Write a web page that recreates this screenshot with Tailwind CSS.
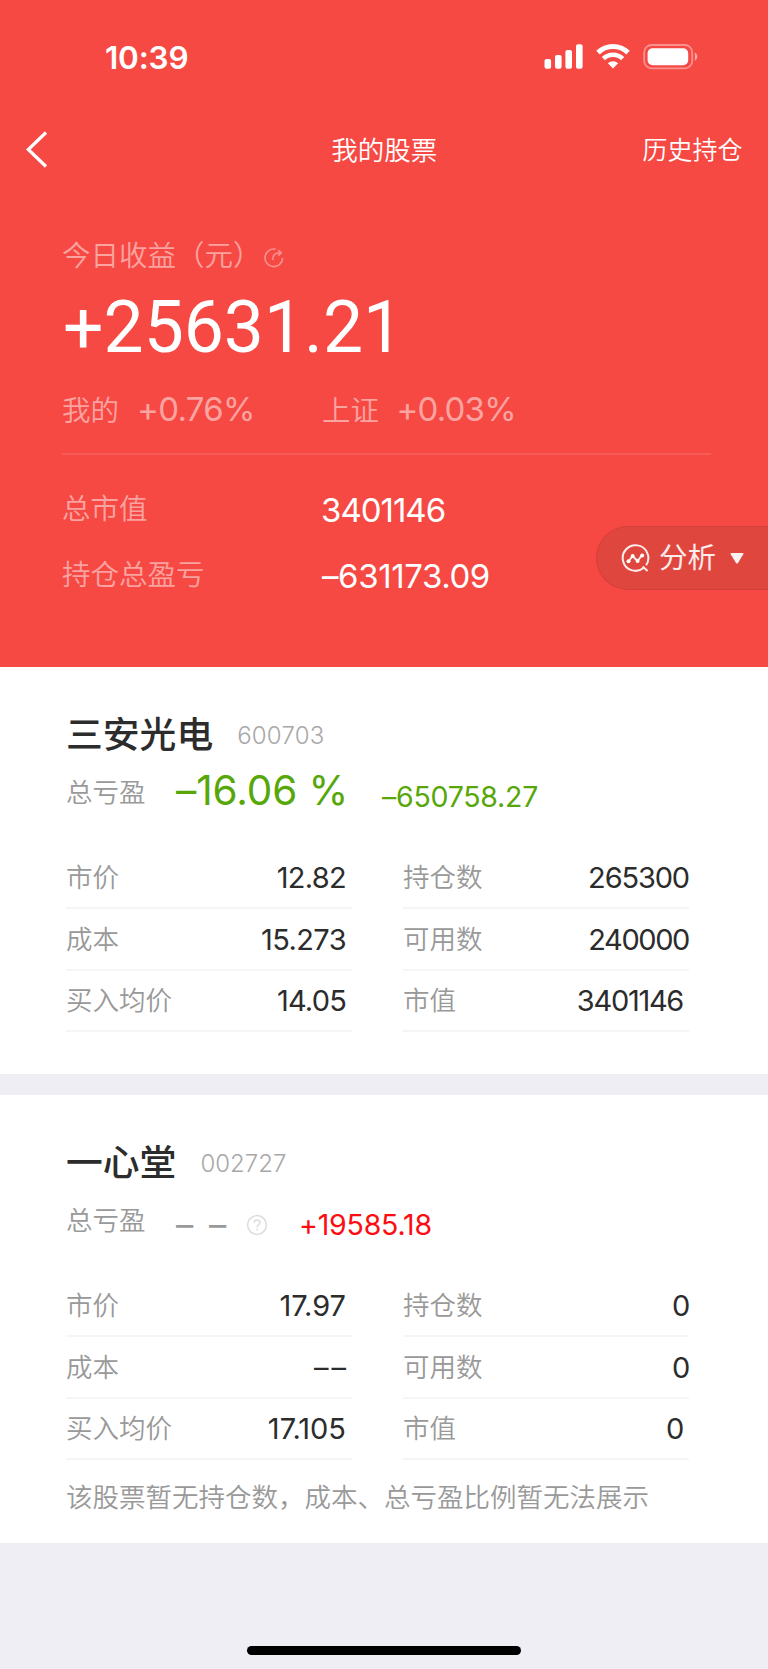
<!DOCTYPE html>
<html lang="zh-CN">
<head>
<meta charset="utf-8">
<title>我的股票</title>
<script src="https://cdn.jsdelivr.net/npm/@tailwindcss/browser@4"></script>
</head>
<body class="bg-[#efeef4] font-['Inter','Noto_Sans_CJK_SC',sans-serif] font-[350] leading-none whitespace-nowrap">
<div class="relative flex h-[1669px] w-[768px] flex-col overflow-hidden">
  <header class="relative h-[667px] bg-[#f64944] text-white">
    <!-- status bar -->
    <div class="flex h-[115px] items-center justify-between pl-[105px] pr-[69px]">
      <span class="text-[31.5px] font-semibold tracking-[-0.2px]">10:39</span>
      <div class="flex items-center gap-[13px] pb-[2px]">
        <svg width="39" height="26" viewBox="0 0 39 26" fill="#fff"><rect x="0.5" y="15" width="6.6" height="9.7" rx="2"/><rect x="11" y="11" width="6.6" height="13.7" rx="2"/><rect x="21.4" y="6" width="6.6" height="18.7" rx="2"/><rect x="32" y="0.3" width="6.6" height="24.4" rx="2"/></svg>
        <svg width="34" height="26" viewBox="0 0 34 26" fill="none" stroke="#fff"><path d="M2 8.6a21.5 21.5 0 0 1 30 0" stroke-width="5"/><path d="M7.4 14.6a13.8 13.8 0 0 1 19.2 0" stroke-width="4.6"/><path d="M11.9 19.2a7.6 7.6 0 0 1 10.2 0L17 24.4z" fill="#fff" stroke="none"/></svg>
        <svg width="56" height="26" viewBox="0 0 56 26"><rect x="1.2" y="1" width="48" height="23.4" rx="7.5" fill="none" stroke="#fff" stroke-opacity=".4" stroke-width="1.8"/><rect x="4.6" y="4.2" width="40.6" height="17" rx="5" fill="#fff"/><path d="M51.8 8.6c3.4 1.4 3.4 6.8 0 8.2z" fill="#fff" fill-opacity=".5"/></svg>
      </div>
    </div>
    <!-- navigation -->
    <div class="grid h-[70px] grid-cols-3 items-center pl-[26px] pr-[25.5px]">
      <svg width="24" height="38" viewBox="0 0 24 38" fill="none" stroke="#fff" stroke-width="3.2"><path d="M20 1.5 2.3 18.5 20 35.5"/></svg>
      <span class="text-center text-[26.5px]">我的股票</span>
      <span class="text-right text-[25px]">历史持仓</span>
    </div>
    <div class="pl-[62px] pt-[53px]">
      <div class="flex h-[37px] items-center text-[28.5px] text-white/50">
        <span>今日收益（元）</span>
        <svg class="ml-[1px] mt-[2px]" width="22" height="22" viewBox="0 0 22 22" fill="none" stroke="#fff" stroke-opacity=".4" stroke-width="1.6"><path d="M12.6 2.2A8.8 8.8 0 1 0 19.6 11"/><path d="M9.8 13c-.4-4.2 2-7.2 7-7.2M15.2 3.2l3 2.6-2.8 2.8"/></svg>
      </div>
      <div class="flex h-[105px] items-center pl-px font-['Roboto'] text-[71.4px] font-normal">+25631.21</div>
      <div class="flex h-[59px] items-center font-normal text-white/50">
        <span class="w-[75px] pt-[3px] text-[28.5px] font-[350]">我的</span><span class="w-[185px] text-[33px] tracking-[-0.7px]">+0.76%</span>
        <span class="w-[74.5px] pt-[3px] text-[28.5px] font-[350]">上证</span><span class="text-[33px] tracking-[-0.8px]">+0.03%</span>
      </div>
      <div class="mt-[14px] h-[2px] w-[649px] bg-white/10"></div>
      <div class="mt-[22px] flex h-[63px] items-center"><span class="w-[259px] pt-0.5 text-[28.5px] text-white/50">总市值</span><span class="pt-1 text-[33px] font-normal tracking-[-1px]">3401146</span></div>
      <div class="flex h-[68px] items-center"><span class="w-[260px] pt-0.5 text-[28.5px] text-white/50">持仓总盈亏</span><span class="pt-1 text-[33px] font-normal tracking-[-0.4px]">–631173.09</span></div>
    </div>
    <!-- floating analysis tab -->
    <div class="absolute right-0 top-[526px] flex h-[64px] w-[172px] items-center rounded-l-full border border-r-0 border-[#d53f3c] bg-[#df463e] pl-[24px] text-[28.5px] text-white/90">
      <svg width="29" height="29" viewBox="0 0 29 29" fill="none" stroke="#fff" stroke-opacity=".9" stroke-width="2"><path d="M22.5 24a12.8 12.8 0 1 1 2.6-2.8M21.6 22.4l5 4.6"/><path d="M7.5 17.5 11.5 12l5 5 4.6-6"/><g fill="#fff" stroke="none"><circle cx="7.5" cy="17.3" r="2"/><circle cx="11.7" cy="12" r="2"/><circle cx="16.6" cy="17" r="2"/><circle cx="21.2" cy="11.6" r="2"/></g></svg>
      <span class="ml-[9px] font-normal">分析</span>
      <svg class="ml-[14px]" width="14" height="11" viewBox="0 0 14 11" fill="#fff" fill-opacity=".92"><path d="M1.5 0h11q1.5 0 .8 1.2L8 9.9q-1 1.2-2 0L.7 1.2Q0 0 1.5 0z"/></svg>
    </div>
  </header>

  <section class="h-[407px] bg-white pl-[66px] pt-[43px]">
    <div class="flex h-[50px] items-center"><h2 class="text-[36.8px] font-medium text-[#2c2c2c]">三安光电</h2><span class="ml-[24px] pt-0.5 text-[24px] font-light tracking-[0.2px] text-[#a8a8a8]">600703</span></div>
    <div class="flex h-[62px] items-center text-[#57a70a]"><span class="w-[110px] pt-0.5 text-[26.5px] text-[#999]">总亏盈</span><span class="w-[206px] text-[40.5px] font-normal tracking-[-0.1px]">–16.06 %</span><span class="pt-3 text-[28.5px] font-normal tracking-[-0.25px]">–650758.27</span></div>
    <div class="mt-[26px] grid w-[623px] grid-cols-[286px_286px] justify-between text-[26.5px] text-[#999]">
      <div class="flex h-[61.4px] items-center justify-between border-b-2 border-[#f5f5f5] pr-[6px]"><span>市价</span><span class="text-[29px] font-normal tracking-[-0.7px] text-[#2c2c2c]">12.82</span></div>
      <div class="flex h-[61.4px] items-center justify-between border-b-2 border-[#f5f5f5]"><span>持仓数</span><span class="text-[29px] font-normal tracking-[-1.15px] text-[#2c2c2c]">265300</span></div>
      <div class="flex h-[61.4px] items-center justify-between border-b-2 border-[#f5f5f5] pr-[6px]"><span>成本</span><span class="text-[29px] font-normal tracking-[-0.6px] text-[#2c2c2c]">15.273</span></div>
      <div class="flex h-[61.4px] items-center justify-between border-b-2 border-[#f5f5f5]"><span>可用数</span><span class="text-[29px] font-normal tracking-[-1.4px] text-[#2c2c2c]">240000</span></div>
      <div class="flex h-[61.4px] items-center justify-between border-b-2 border-[#f5f5f5] pr-[6px]"><span>买入均价</span><span class="text-[29px] font-normal tracking-[-0.8px] text-[#2c2c2c]">14.05</span></div>
      <div class="flex h-[61.4px] items-center justify-between border-b-2 border-[#f5f5f5] pr-[6px]"><span>市值</span><span class="text-[29px] font-normal tracking-[-1.3px] text-[#2c2c2c]">3401146</span></div>
    </div>
  </section>

  <section class="mt-[21px] h-[448px] bg-white pl-[66px] pt-[43px]">
    <div class="flex h-[50px] items-center"><h2 class="text-[36.8px] font-medium text-[#2c2c2c]">一心堂</h2><span class="ml-[24px] pt-0.5 text-[24px] font-light text-[#a8a8a8]">002727</span></div>
    <div class="flex h-[62px] items-center text-[#999]">
      <span class="w-[110px] pt-0.5 text-[26.5px]">总亏盈</span>
      <span class="w-[70px] pt-3 text-[34.5px] font-normal [word-spacing:6px]">– –</span>
      <svg class="mt-[11px]" width="22" height="22" viewBox="0 0 22 22" fill="none" stroke="#dcdcdc" stroke-width="1.5"><circle cx="11" cy="11" r="9.4"/><path d="M8.2 8.8c0-3.8 5.8-3.6 5.8-.3 0 2.2-2.9 2.3-2.9 4.7M11.1 14.6v1.8"/></svg>
      <span class="ml-[31px] pt-3 text-[28.5px] font-normal tracking-[-0.2px] text-[#fb0d12]">+19585.18</span>
    </div>
    <div class="mt-[26px] grid w-[623px] grid-cols-[286px_286px] justify-between text-[26.5px] text-[#999]">
      <div class="flex h-[61.4px] items-center justify-between border-b-2 border-[#f5f5f5] pr-[6px]"><span>市价</span><span class="text-[29px] font-normal text-[#2c2c2c]">17.97</span></div>
      <div class="flex h-[61.4px] items-center justify-between border-b-2 border-[#f5f5f5]"><span>持仓数</span><span class="text-[29px] font-normal tracking-[-1.25px] text-[#2c2c2c]">0</span></div>
      <div class="flex h-[61.4px] items-center justify-between border-b-2 border-[#f5f5f5] pr-[6px]"><span>成本</span><span class="mr-[-3px] text-[29px] font-normal tracking-[3px] text-[#2c2c2c]">––</span></div>
      <div class="flex h-[61.4px] items-center justify-between border-b-2 border-[#f5f5f5]"><span>可用数</span><span class="text-[29px] font-normal tracking-[-1.25px] text-[#2c2c2c]">0</span></div>
      <div class="flex h-[61.4px] items-center justify-between border-b-2 border-[#f5f5f5] pr-[6px]"><span>买入均价</span><span class="text-[29px] font-normal text-[#2c2c2c]">17.105</span></div>
      <div class="flex h-[61.4px] items-center justify-between border-b-2 border-[#f5f5f5] pr-[6px]"><span>市值</span><span class="text-[29px] font-normal tracking-[-1.25px] text-[#2c2c2c]">0</span></div>
    </div>
    <p class="flex h-[75px] items-center text-[26.5px] text-[#999]">该股票暂无持仓数，成本、总亏盈比例暂无法展示</p>
  </section>
  <!-- home indicator -->
  <div class="absolute bottom-[14px] left-[247px] h-[9px] w-[274px] rounded-full bg-black"></div>
</div>
</body>
</html>
